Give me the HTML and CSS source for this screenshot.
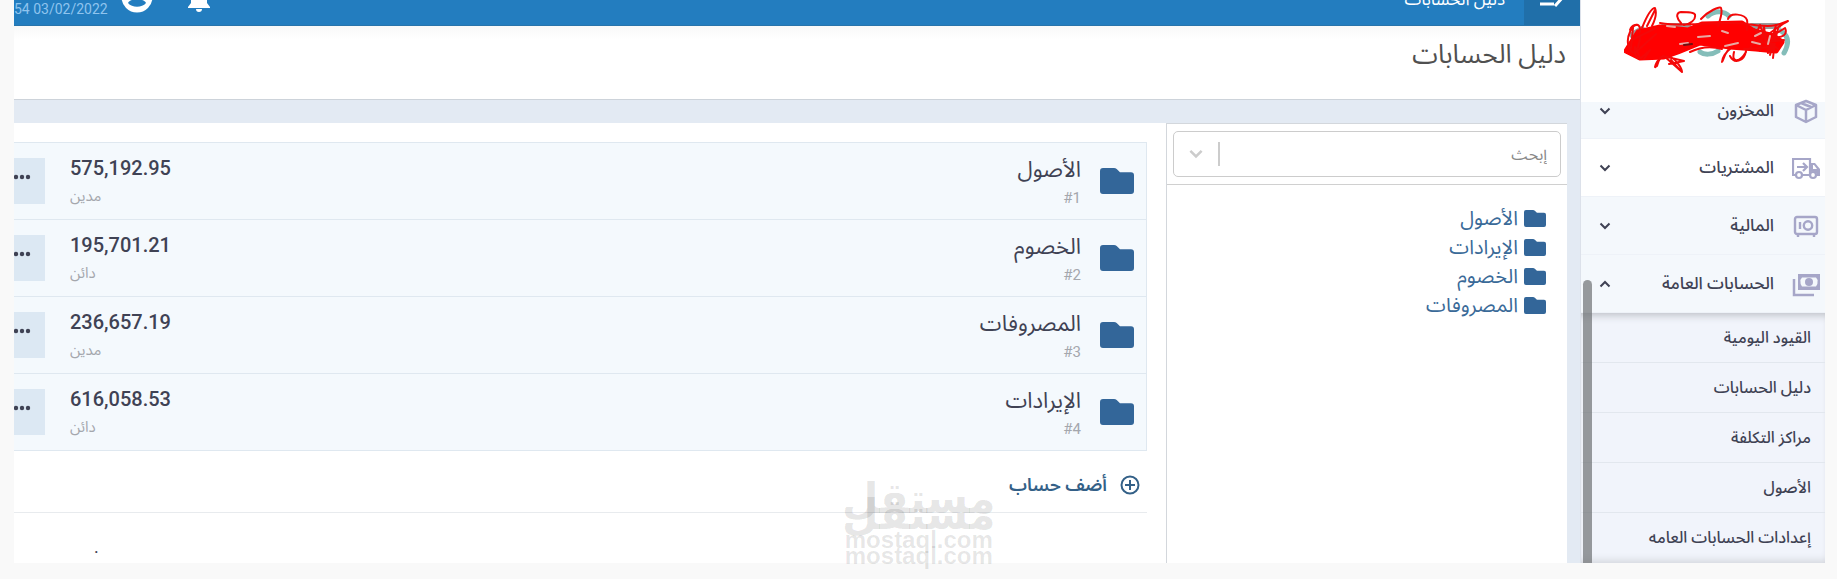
FILE: index.html
```html
<!DOCTYPE html>
<html lang="ar" dir="rtl">

<head>
  <meta charset="UTF-8">
  <meta name="viewport" content="width=device-width, initial-scale=1.0">
  <title>دليل الحسابات</title>
  <link rel="stylesheet" href="styles.css">
</head>

<body>
  <svg class="symbols" aria-hidden="true">
    <symbol id="folder" viewBox="0 0 34 26">
      <path d="M3 0h11c1 0 2 .4 2.700 1.100L20 4.300h11a3 3 0 0 1 3 3V23a3 3 0 0 1-3 3H3a3 3 0 0 1-3-3V3a3 3 0 0 1 3-3z" fill="#336699"/>
    </symbol>
    <symbol id="down" viewBox="0 0 12 8">
      <path d="M1.500 1.500L6 6l4.500-4.500" fill="none" stroke="currentColor" stroke-width="2"/>
    </symbol>
    <symbol id="dots" viewBox="0 0 17 6">
      <circle cx="2" cy="3" r="2.200"/>
      <circle cx="8" cy="3" r="2.200"/>
      <circle cx="14" cy="3" r="2.200"/>
    </symbol>
  </svg>
  <div class="app">
    <aside class="sidebar">
      <div class="logo">
        <svg width="168" height="70" viewBox="0 0 168 70" fill="none" stroke-linecap="round" stroke-linejoin="round">
          <path d="M84 10c7-6 16-5 21 0M76 46c4 3 12 3 18-1M157 25c8 5 8 13 3 22" stroke="#84bdb9" stroke-width="5"/>
          <path d="M40 20h24M128 20h26M8 29l10-6" stroke="#999" stroke-width="6"/>
          <path d="M14 26l22-5 28 3 14-6 40-1 12 8 20 5 8 6-6 9-20-2-26-2-30-4-22 9-14 5-24 1-14-7z" fill="#f00" stroke="#f00" stroke-width="5"/>
          <g stroke="#f40808" stroke-width="2">
            <path d="M16 26c1-11-7-8-10 0-4 8-2 16 2 20 5 3 7-8 8-14M6 24c2-6 8-6 9-4M9 22l-2 20M18 22C22 12 27 2 31 2c2 5 0 12-3 18M23 20l8-16M57 17c-4-4-6-10 0-11 6 0 14 0 14 3 1 5-5 9-11 10M77 13C84 5 96 0 97 2c2 5-1 12-3 18M104 13c2-7 17-5 19 1 1 4-1 6 0 10M36 17c30 5 60-3 86 1 14 2 28 3 34 0l8-3c-12 6-24 18-36 24"/>
            <path d="M11 41c-1 6 1 13 6 11l9-8-6 9M12 42l4 10M37 51c-5 8-5 11-6 10 1-5 5-9 8-11l21 5-15 3M35 54l-2 6M40 50l18 16c0-4-6-12-11-15M47 54l8 9M104 44c-5 7-5 12-6 12 0-4 4-10 8-13M106 50c4 8 14 6 16-5M110 46c-3 12 6 10 12 0M120 43c15 0 25-4 28 0l6-20M136 45l4-24 4 26 8-28-6 30 7-22 8-5c3 7-3 10-11 9M152 26l-3 26M126 43l10-24 8 24M130 23l24 20M128 38l32-4M8 34l24-12M12 46l20-18M66 46c12-6 22-6 32-3"/>
          </g>
          <path d="M74 31l12-1M98 25l6 2M56 38l8-1M101 40l13-3M131 30l6-3M128 36l8 2M146 30l-2 8M43 20l8 1" stroke="#e8aaa4" stroke-width="2"/>
          <path d="M60 39l8-1" stroke="#701010" stroke-width="2"/>
        </svg>
      </div>
      <nav class="menu">
        <a href="#" class="menu-item first">
          <svg class="menu-icon" viewBox="0 0 28 28" fill="none" stroke="#a6a6c8" stroke-width="2.500" stroke-linejoin="round">
            <path d="M14 4l10 4v12l-10 5-10-5V8zM4 8l10 5 10-5M14 13v12M9 6l10 4"/>
          </svg>
          <span>المخزون</span>
          <svg class="arrow"><use href="#down"/></svg>
        </a>
        <a href="#" class="menu-item active">
          <svg class="menu-icon" viewBox="0 0 28 28" fill="none" stroke="#a6a6c8" stroke-width="2.200">
            <path d="M4 21H1V5h17v16h-7"/>
            <circle cx="7" cy="21" r="3"/><circle cx="21" cy="21" r="3"/>
            <path d="M5 13h9M11 9l4 4-4 4"/>
            <path d="M18 9h5l5 6v7h-3a4 4 0 0 0-7-3zM21 11v4h4l-3-4z" fill="#a6a6c8" fill-rule="evenodd" stroke="none"/>
          </svg>
          <span>المشتريات</span>
          <svg class="arrow"><use href="#down"/></svg>
        </a>
        <a href="#" class="menu-item">
          <svg class="menu-icon" viewBox="0 0 28 28" fill="none" stroke="#a6a6c8" stroke-width="2.400">
            <rect x="3" y="5" width="22" height="17" rx="2"/>
            <circle cx="16" cy="13.500" r="4.200"/>
            <path d="M8 10v7M6 22v3M22 22v3M25 9h1M25 17h1"/>
          </svg>
          <span>المالية</span>
          <svg class="arrow"><use href="#down"/></svg>
        </a>
        <a href="#" class="menu-item">
          <svg class="menu-icon" viewBox="0 0 28 28" fill="none" stroke="#a6a6c8" stroke-width="2.500">
            <path d="M2 9v16h20"/>
            <path d="M6 4h22v16H6zM10 7.500A5 5 0 0 0 8.500 12 5 5 0 0 0 10 16.500h14a5 5 0 0 0 1.500-4.500A5 5 0 0 0 24 7.500z" fill="#a6a6c8" fill-rule="evenodd" stroke="none"/>
            <circle cx="17" cy="12" r="4" fill="#a6a6c8" stroke="none"/>
          </svg>
          <span>الحسابات العامة</span>
          <svg class="arrow up"><use href="#down"/></svg>
        </a>
        <div class="submenu">
          <a href="#">القيود اليومية</a>
          <a href="#">دليل الحسابات</a>
          <a href="#">مراكز التكلفة</a>
          <a href="#">الأصول</a>
          <a href="#">إعدادات الحسابات العامه</a>
        </div>
      </nav>
      <div class="scrollbar"></div>
    </aside>

    <main class="main">
      <header class="topbar">
        <button class="toggle" aria-label="القائمة">
          <svg width="26" height="20" viewBox="0 0 26 20" fill="none" stroke="#fff" stroke-width="3">
            <path d="M1 5h14M1 14h14M16 16l8-9-7-7"/>
          </svg>
        </button>
        <span class="crumb">دليل الحسابات</span>
        <div class="user">
          <svg width="24" height="30" viewBox="0 0 24 30" fill="#fff">
            <path d="M12 2a8 8 0 0 1 8 8v10l3 4v1H1v-1l3-4V10a8 8 0 0 1 8-8zM9 26h6a3 3 0 0 1-6 0z"/>
          </svg>
          <svg width="32" height="32" viewBox="0 0 32 32">
            <circle cx="16" cy="16" r="15.500" fill="#fff"/>
            <circle cx="16" cy="11" r="5" fill="#237dbf"/>
            <path d="M7 22c2-5 16-5 18 0-4 5-14 5-18 0z" fill="#237dbf"/>
          </svg>
          <span class="date" dir="ltr">54 03/02/2022</span>
        </div>
      </header>
      <div class="title">
        <h1>دليل الحسابات</h1>
      </div>
      <div class="content">
        <section class="tree">
          <div class="search">
            <div class="search-box">
              <input type="text" placeholder="إبحث" aria-label="إبحث">
              <button aria-label="فتح"><svg width="16" height="10"><use href="#down"/></svg></button>
            </div>
          </div>
          <ul>
            <li><svg><use href="#folder"/></svg><a href="#">الأصول</a></li>
            <li><svg><use href="#folder"/></svg><a href="#">الإيرادات</a></li>
            <li><svg><use href="#folder"/></svg><a href="#">الخصوم</a></li>
            <li><svg><use href="#folder"/></svg><a href="#">المصروفات</a></li>
          </ul>
        </section>

        <section class="accounts">
          <div class="list">
            <div class="account">
              <svg class="folder"><use href="#folder"/></svg>
              <div class="name"><a href="#">الأصول</a><small dir="ltr">#1</small></div>
              <div class="amount"><b>575,192.95</b><small>مدين</small></div>
              <button class="more" aria-label="المزيد"><svg><use href="#dots"/></svg></button>
            </div>
            <div class="account">
              <svg class="folder"><use href="#folder"/></svg>
              <div class="name"><a href="#">الخصوم</a><small dir="ltr">#2</small></div>
              <div class="amount"><b>195,701.21</b><small>دائن</small></div>
              <button class="more" aria-label="المزيد"><svg><use href="#dots"/></svg></button>
            </div>
            <div class="account">
              <svg class="folder"><use href="#folder"/></svg>
              <div class="name"><a href="#">المصروفات</a><small dir="ltr">#3</small></div>
              <div class="amount"><b>236,657.19</b><small>مدين</small></div>
              <button class="more" aria-label="المزيد"><svg><use href="#dots"/></svg></button>
            </div>
            <div class="account">
              <svg class="folder"><use href="#folder"/></svg>
              <div class="name"><a href="#">الإيرادات</a><small dir="ltr">#4</small></div>
              <div class="amount"><b>616,058.53</b><small>دائن</small></div>
              <button class="more" aria-label="المزيد"><svg><use href="#dots"/></svg></button>
            </div>
          </div>
          <div class="add-row">
            <button class="add">
              <svg width="20" height="20" viewBox="0 0 20 20" fill="none" stroke="currentColor" stroke-width="2">
                <circle cx="10" cy="10" r="8.500"/><path d="M10 5v10M5 10h10"/>
              </svg>
              <span>أضف حساب</span>
            </button>
          </div>
          <p class="note">.</p>
        </section>
      </div>
    </main>

    <div class="watermark" aria-hidden="true">
      <div class="mark"><b>مستقل</b><span>mostaql.com</span></div>
      <div class="mark second"><b>مستقل</b><span>mostaql.com</span></div>
    </div>
  </div>
</body>

</html>
```
FILE: styles.css
```css
* {
  box-sizing: border-box;
}

body {
  margin: 0;
  padding: 0 12px 16px 14px;
  background-color: #f9f9f9;
  font-family: Roboto, "Noto Sans Arabic", "Noto Sans", "DejaVu Sans", sans-serif;
  color: #3f4254;
}

a {
  color: inherit;
  text-decoration: none;
}

button {
  font-family: inherit;
  border: 0;
  padding: 0;
  cursor: pointer;
}

.symbols {
  display: none;
}

.app {
  position: relative;
  display: flex;
  min-height: calc(100vh - 16px);
  background-color: #fff;
}

/* sidebar */
.sidebar {
  position: relative;
  width: 245px;
  flex-shrink: 0;
  border-left: 1px solid #dce1ea;
  font-weight: 500;
}

.logo {
  height: 102px;
  padding: 6px 33px;
}

.menu-item {
  display: flex;
  align-items: center;
  height: 58px;
  padding: 0 5px 0 18px;
  background-color: #f4f8fc;
  border-bottom: 1px solid #eef2f8;
  font-size: 17px;
}

.menu-item.first {
  height: 37px;
  padding-bottom: 18px;
}

.menu-item.active {
  background-color: #fff;
}

.menu-icon {
  width: 28px;
  height: 28px;
  flex-shrink: 0;
  margin-left: 18px;
}

.menu-item span {
  flex: 1;
}

.arrow {
  width: 12px;
  height: 8px;
}

.arrow.up {
  transform: rotate(180deg);
}

.submenu {
  background-color: #f1f4fb;
  box-shadow: inset 0 8px 8px -6px #b9bcc2, inset 0 -8px 8px -6px #d0d3d9;
}

.submenu a {
  display: flex;
  align-items: center;
  height: 50px;
  padding-right: 14px;
  border-bottom: 1px solid #e2e7ee;
  font-size: 16px;
}

.submenu a:last-child {
  border-bottom: 0;
}

.scrollbar {
  position: absolute;
  left: 2px;
  top: 280px;
  bottom: 0;
  width: 9px;
  border-radius: 5px 5px 0 0;
  background-color: rgba(110, 112, 116, 0.7);
}

/* header */
.main {
  flex: 1;
  display: flex;
  flex-direction: column;
  min-width: 0;
}

.topbar {
  display: flex;
  align-items: flex-end;
  height: 26px;
  overflow: hidden;
  background-color: #237dbf;
  border-bottom: 1px solid #2874ab;
  color: #fff;
}

.toggle {
  width: 56px;
  height: 56px;
  background-color: #206fa9;
}

.toggle svg {
  margin-top: 8px;
}

.crumb {
  padding: 0 19px 14px 0;
  font-size: 17px;
  line-height: 24px;
}

.user {
  display: flex;
  align-items: flex-end;
  gap: 34px;
  margin-right: auto;
}

.user svg {
  margin-bottom: 12px;
}

.user .date {
  margin-right: -22px;
  padding: 0 1px 7px 0;
  font-size: 14px;
  line-height: 18px;
  color: #8fc4ee;
}

.title {
  display: flex;
  height: 74px;
  padding: 8px 14px;
  border-bottom: 1px solid #cdd3da;
  background: linear-gradient(#f8f8f8, #fff 14px);
}

.title h1 {
  margin: 0;
  font-size: 26px;
  font-weight: 400;
  line-height: 40px;
  color: #505050;
}

.content {
  flex: 1;
  display: flex;
  padding: 23px 13px 0 0;
  background-color: #e3eaf3;
}

/* tree */
.tree {
  width: 401px;
  flex-shrink: 0;
  background-color: #fff;
  border: 1px solid #d3d7dc;
  border-width: 1px 0 0 1px;
}

.search {
  padding: 7px 6px;
  border-bottom: 1px solid #d0d0d0;
}

.search-box {
  display: flex;
  align-items: center;
  height: 46px;
  border: 1px solid #ccc;
  border-radius: 5px;
}

.search-box input {
  flex: 1;
  min-width: 0;
  padding: 0 13px;
  border: 0;
  background: none;
  font: inherit;
  font-size: 16px;
  outline: none;
}

.search-box input::placeholder {
  color: #888;
  opacity: 1;
}

.search-box button {
  width: 46px;
  height: 24px;
  border-right: 2px solid #ccc;
  background: none;
  color: #ccc;
}

.tree ul {
  margin: 0;
  padding: 19px 21px;
  list-style: none;
}

.tree li {
  display: flex;
  align-items: center;
  gap: 6px;
  height: 29px;
  font-size: 20px;
  color: #3a6a98;
}

.tree li svg {
  width: 22px;
  height: 17px;
}

/* accounts */
.accounts {
  flex: 1;
  padding: 19px 19px 0 0;
  background-color: #fff;
}

.list {
  border: 1px solid #dfe8f0;
  border-width: 1px 1px 0 0;
  background-color: #f4f9fd;
}

.account {
  display: flex;
  align-items: center;
  height: 77px;
  padding-right: 12px;
  border-bottom: 1px solid #dfe8f0;
}

.folder {
  width: 34px;
  height: 26px;
}

.name {
  flex: 1;
  padding: 6px 19px 0 0;
  font-size: 22px;
}

.name a,
.name small,
.amount b,
.amount small {
  display: block;
  line-height: 28px;
}

.name small {
  text-align: right;
}

.account small {
  font-size: 15px;
  color: #a4a7ad;
}

.amount {
  direction: ltr;
  width: 124px;
  margin-left: 25px;
  padding-top: 2px;
}

.amount b {
  font-size: 20px;
  font-weight: 500;
}

.more {
  display: flex;
  align-items: center;
  width: 31px;
  height: 46px;
  padding-bottom: 8px;
  direction: ltr;
  background-color: #dce8f3;
}

.more svg {
  width: 17px;
  height: 6px;
  fill: #3f4254;
}

.add-row {
  display: flex;
  align-items: center;
  height: 62px;
  padding-top: 7px;
  border-bottom: 1px solid #e8ebee;
}

.add {
  display: flex;
  align-items: center;
  gap: 13px;
  padding-right: 7px;
  background: none;
  color: #336087;
  font-size: 18px;
  font-weight: 600;
}

.note {
  margin: 0;
  padding: 24px 80px 0;
  font-size: 18px;
  line-height: 20px;
  text-align: left;
}

/* watermark over the page */
.watermark {
  position: absolute;
  left: 828px;
  top: 468px;
  direction: ltr;
  color: rgba(0, 0, 0, 0.1);
  font-family: "Liberation Sans", "DejaVu Sans", sans-serif;
}

.mark {
  display: flex;
  flex-direction: column;
  align-items: center;
}

.mark b {
  font-size: 42px;
  line-height: 62px;
}

.mark span {
  font-size: 24px;
  font-weight: 700;
  line-height: 20px;
}

.mark.second {
  margin-top: -66px;
}
```
